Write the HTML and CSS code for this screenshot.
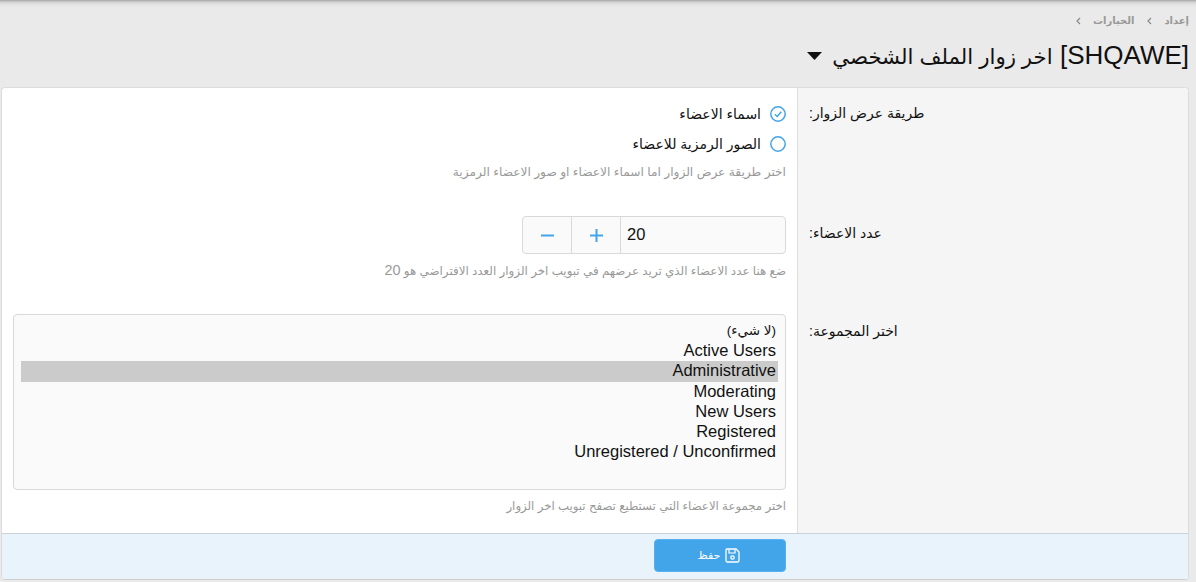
FILE: index.html
```html
<!DOCTYPE html>
<html lang="ar" dir="rtl">
<head>
<meta charset="utf-8">
<title>اخر زوار الملف الشخصي</title>
<link rel="stylesheet" href="styles.css">
</head>
<body>
<header class="head">
  <nav class="crumbs">
    <span>إعداد</span><span class="sep"><svg width="6" height="8" viewBox="0 0 6 8"><path d="M5 1 2 4l3 3" fill="none" stroke="#8a8a8a" stroke-width="1.2"/></svg></span>
    <span>الخيارات</span><span class="sep"><svg width="6" height="8" viewBox="0 0 6 8"><path d="M5 1 2 4l3 3" fill="none" stroke="#8a8a8a" stroke-width="1.2"/></svg></span>
  </nav>
  <h1 class="title"><span>[SHQAWE] <span class="title-ar">اخر زوار الملف الشخصي</span></span><svg class="caret" width="15" height="8" viewBox="0 0 15 8"><path d="M0 0h15L7.500 8z" fill="#111"/></svg></h1>
</header>
<main class="card">
  <div class="rows">
    <section class="row row-a">
      <div class="label">طريقة عرض الزوار:</div>
      <div class="field">
        <label class="radio"><svg width="16" height="16" viewBox="0 0 16 16"><circle cx="8" cy="8" r="7.200" fill="none" stroke="#42a5ea" stroke-width="1.500"/><path d="M4.800 8.200 7.200 10.500 11.300 5.700" fill="none" stroke="#42a5ea" stroke-width="1.500"/></svg><span>اسماء الاعضاء</span></label>
        <label class="radio"><svg width="16" height="16" viewBox="0 0 16 16"><circle cx="8" cy="8" r="7.200" fill="none" stroke="#42a5ea" stroke-width="1.500"/></svg><span>الصور الرمزية للاعضاء</span></label>
        <p class="help help-a">اختر طريقة عرض الزوار اما اسماء الاعضاء او صور الاعضاء الرمزية</p>
      </div>
    </section>
    <section class="row row-b">
      <div class="label">عدد الاعضاء:</div>
      <div class="field">
        <div class="stepper">
          <div class="step"><svg width="13" height="13" viewBox="0 0 13 13"><path d="M0 6.500h13" stroke="#42a5ea" stroke-width="2"/></svg></div>
          <div class="step"><svg width="13" height="13" viewBox="0 0 13 13"><path d="M0 6.500h13M6.500 0v13" stroke="#42a5ea" stroke-width="2"/></svg></div>
          <div class="value">20</div>
        </div>
        <p class="help help-b">ضع هنا عدد الاعضاء الذي تريد عرضهم في تبويب اخر الزوار العدد الافتراضي هو <span class="num">20</span></p>
      </div>
    </section>
    <section class="row row-c">
      <div class="label">اختر المجموعة:</div>
      <div class="field">
        <ul class="list">
          <li class="none">(لا شيء)</li>
          <li>Active Users</li>
          <li class="selected">Administrative</li>
          <li>Moderating</li>
          <li>New Users</li>
          <li>Registered</li>
          <li>Unregistered / Unconfirmed</li>
        </ul>
        <p class="help help-c">اختر مجموعة الاعضاء التي تستطيع تصفح تبويب اخر الزوار</p>
      </div>
    </section>
  </div>
  <footer class="actions">
    <button class="save" type="button"><svg width="15" height="15" viewBox="0 0 15 15"><path d="M2 1h9l3 3v8.500a1.500 1.500 0 0 1-1.500 1.500h-10A1.500 1.500 0 0 1 1 12.500V2a1 1 0 0 1 1-1z" fill="none" stroke="#fff" stroke-width="1.300"/><path d="M4 1.500V5h6V1.500" fill="none" stroke="#fff" stroke-width="1.200"/><circle cx="7.500" cy="9.500" r="1.700" fill="none" stroke="#fff" stroke-width="1.300"/></svg><span>حفظ</span></button>
  </footer>
</main>
</body>
</html>
```

FILE: styles.css
```css
* { box-sizing: border-box; }
html, body { margin: 0; height: 582px; overflow: hidden; }
body {
  background: #eaeaea;
  color: #111;
  font-family: "Liberation Sans", "DejaVu Sans", sans-serif;
  font-size: 14px;
}
.head {
  height: 87px;
  padding: 14px 7px 0 8px;
  background: linear-gradient(#a6a6a6 0, #cfcfcf 2px, #e2e2e2 4px, #eaeaea 8px);
}
.crumbs {
  display: flex;
  align-items: center;
  gap: 12px;
  height: 13px;
  font-size: 10px;
  font-weight: bold;
  color: #999;
}
.sep { display: flex; }
.title {
  display: flex;
  align-items: center;
  gap: 10px;
  margin: 12px 0 0;
  height: 32px;
  font-size: 26px;
  font-weight: normal;
  color: #111;
}
.title-ar { font-size: 21.300px; }
.caret { margin-top: 1px; }
.card {
  width: 1188px;
  height: 493px;
  margin-right: 7px;
  background: #fff;
  border: 1px solid #dcdcdc;
  border-bottom-color: #cfcfcf;
  border-radius: 4px;
  overflow: hidden;
  display: flex;
  flex-direction: column;
}
.rows { height: 445px; flex: none; display: flex; flex-direction: column; }
.row { display: grid; grid-template-columns: 391px 1fr; }
.row-a { height: 120px; }
.row-b { height: 98px; }
.row-c { flex: 1; }
.label {
  background: #f5f5f5;
  border-left: 1px solid #dedede;
  padding: 16px 0 0 11px;
  font-size: 14px;
  line-height: 18px;
  text-align: left;
}
.field { padding: 0 11px; }
.row-a .field { padding-top: 11px; }
.row-b .field { padding-top: 8px; }
.row-c .field { padding-top: 8px; }
.radio { display: flex; align-items: center; gap: 9px; height: 30px; line-height: 18px; font-size: 14px; }
.radio svg { flex: none; }
.help { margin: 0; color: #999; line-height: 16px; }
.help-a { margin-top: 5px; font-size: 12.200px; }
.help-b { margin-top: 9px; font-size: 11.900px; }
.help-c { margin-top: 8px; font-size: 11.750px; }
.num { font-size: 14.400px; line-height: 14px; }
.stepper {
  direction: ltr;
  display: flex;
  width: 264px;
  height: 38px;
  border: 1px solid #d9d9d9;
  border-radius: 4px;
  background: #fafafa;
  font-size: 16.500px;
}
.value { flex: 1; padding: 0 6px; line-height: 35px; }
.step { width: 49px; display: flex; align-items: center; justify-content: center; border-right: 1px solid #d9d9d9; }
.list {
  list-style: none;
  margin: 0;
  padding: 6px 7px 0;
  height: 176px;
  border: 1px solid #d9d9d9;
  border-radius: 4px;
  background: #fafafa;
  font-size: 16.500px;
  line-height: 19.200px;
}
.list li { padding: 0 2px 1px; }
.list .none { font-size: 13.500px; }
.selected { background: #cbcbcb; }
.actions {
  flex: 1;
  background: #e8f3fc;
  border-top: 1px solid #cdd2d6;
  padding: 5px 402px 0 0;
  display: flex;
}
.save {
  width: 132px;
  height: 33px;
  display: flex;
  align-items: center;
  justify-content: center;
  gap: 5px;
  background: #42a5ea;
  border: 1px solid #5bb1ee;
  border-radius: 4px;
  color: #fff;
  font: 11px "Liberation Sans", "DejaVu Sans", sans-serif;
  padding: 0 2px 0 0;
}
```
